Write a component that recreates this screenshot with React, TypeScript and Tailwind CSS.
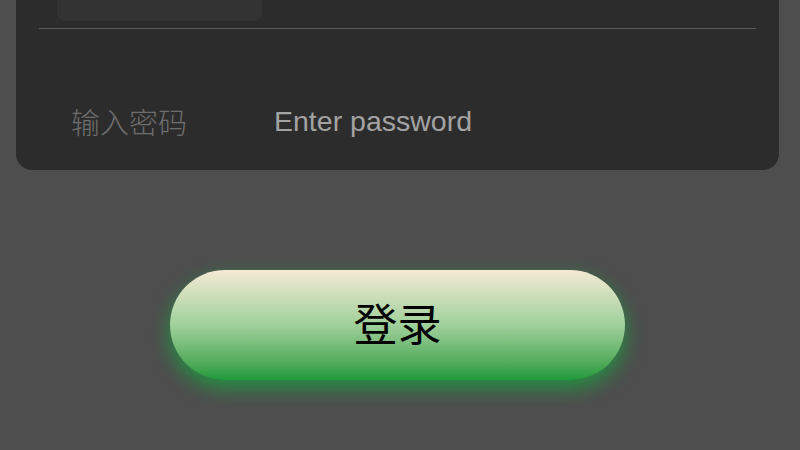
import React from "react";

export default function App() {
  return (
    <div
      className="w-[800px] h-[450px] overflow-hidden bg-[#4e4e4e]"
      style={{ fontFamily: '"Liberation Sans", Arial, "Noto Sans CJK SC", sans-serif' }}
    >
      <div className="ml-[16px] mr-[21px] mt-[-40px] h-[210px] rounded-[16px] bg-[#2c2c2c] px-[23px] flex flex-col">
        <div className="ml-[18px] w-[205px] h-[61px] shrink-0 rounded-[8px] bg-[#333333]" />
        <div className="mt-[7px] h-px bg-[#5c5c5c]" />
        <div className="mt-[62px] flex items-center pl-[32px] h-[60px]">
          <span className="w-[203px] text-[29px] leading-none text-[#6e6e6e]" style={{ fontFamily: '"Noto Sans CJK SC", sans-serif', fontWeight: 300 }}>
            输入密码
          </span>
          <span className="text-[28.5px] leading-none text-[#a3a3a3]">Enter password</span>
        </div>
      </div>
      <div className="mt-[100px] pl-[170px]">
        <button
          className="w-[455px] h-[110px] pb-[6px] rounded-full flex items-center justify-center text-black text-[44px] bg-gradient-to-b from-[#f4ead4] via-[#9fd09b] to-[#1b9a3a] shadow-[0_8px_20px_rgba(20,170,60,0.75)]"
          style={{ fontFamily: '"Noto Sans CJK SC", sans-serif' }}
        >
          登录
        </button>
      </div>
    </div>
  );
}
